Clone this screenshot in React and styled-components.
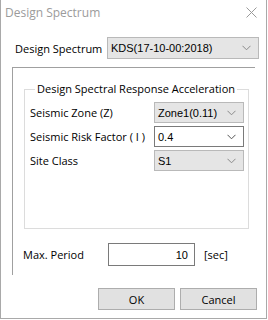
import React from "react";
import styled, { createGlobalStyle } from "styled-components";

const Global = createGlobalStyle`
  html, body {
    margin: 0;
    padding: 0;
    background: #ffffff;
  }
  * { box-sizing: border-box; }
`;

function Chevron({ color = "#6d6d6d" }) {
  return (
    <svg width="9" height="6" viewBox="0 0 9 6">
      <path d="M0.5 0.8 L4.5 4.8 L8.5 0.8" fill="none" stroke={color} strokeWidth="1" />
    </svg>
  );
}

function Combo({ value, width, height = 21, disabled }) {
  return (
    <ComboBox $w={width} $h={height} $disabled={disabled}>
      <span>{value}</span>
      <Chevron color={disabled ? "#8a8a8a" : "#555"} />
    </ComboBox>
  );
}

export default function App() {
  return (
    <>
      <Global />
      <Window>
        <TitleBar>
          <Title>Design Spectrum</Title>
          <Close>
            <svg width="11" height="11" viewBox="0 0 11 11">
              <path d="M0.5 0.5 L10.5 10.5 M10.5 0.5 L0.5 10.5" stroke="#9a9a9a" strokeWidth="1" />
            </svg>
          </Close>
        </TitleBar>

        <TopRow>
          <Label>Design Spectrum</Label>
          <Combo value="KDS(17-10-00:2018)" width={152} height={22} disabled />
        </TopRow>

        <Panel>
          <Group>
            <Legend>Design Spectral Response Acceleration</Legend>
            <GroupRows>
              <Row>
                <Label>Seismic Zone (Z)</Label>
                <Combo value="Zone1(0.11)" width={90} disabled />
              </Row>
              <Row>
                <Label>Seismic Risk Factor ( I )</Label>
                <Combo value="0.4" width={90} />
              </Row>
              <Row>
                <Label>Site Class</Label>
                <Combo value="S1" width={90} disabled />
              </Row>
            </GroupRows>
          </Group>

          <PeriodRow>
            <PeriodLabel>Max. Period</PeriodLabel>
            <NumberBox>10</NumberBox>
            <Unit>[sec]</Unit>
          </PeriodRow>
        </Panel>

        <Buttons>
          <Button>OK</Button>
          <Button>Cancel</Button>
        </Buttons>
      </Window>
    </>
  );
}

const Window = styled.div`
  width: 267px;
  height: 319px;
  background: #ffffff;
  border-left: 1px solid #a9a9a9;
  border-right: 1px solid #a9a9a9;
  border-bottom: 1px solid #a9a9a9;
  font-family: "Open Sans", "Noto Sans", sans-serif;
  font-size: 11px;
  color: #000;
  display: flex;
  flex-direction: column;
`;

const TitleBar = styled.div`
  height: 30px;
  display: flex;
  align-items: flex-start;
  justify-content: space-between;
  padding: 4px 9px 0 4px;
`;

const Title = styled.div`
  font-family: "Open Sans", "Noto Sans", sans-serif;
  font-size: 12px;
  color: #9b9b9b;
`;

const Close = styled.div`
  margin-top: 3px;
  display: flex;
`;

const TopRow = styled.div`
  display: flex;
  align-items: center;
  justify-content: space-between;
  padding: 7px 7px 0 14px;
`;

const Label = styled.div`
  font-family: "Open Sans", "Noto Sans", sans-serif;
  font-size: 11px;
  white-space: nowrap;
`;

const PeriodLabel = styled(Label)`
  width: 85px;
`;

const ComboBox = styled.div`
  width: ${(p) => p.$w}px;
  height: ${(p) => p.$h}px;
  display: flex;
  align-items: center;
  justify-content: space-between;
  padding: 0 7px 0 3px;
  background: ${(p) => (p.$disabled ? "#e5e5e5" : "#ffffff")};
  border: 1px solid ${(p) => (p.$disabled ? "#b9b9b9" : "#7a7a7a")};
  font-family: "Liberation Sans", Arial, sans-serif;
  font-size: 11px;
`;

const Panel = styled.div`
  margin: 8px 11px 0 11px;
  height: 208px;
  border-left: 1px solid #a0a0a0;
  border-top: 1px solid #a0a0a0;
  padding: 14px 6px 0 11px;
`;

const Group = styled.fieldset`
  margin: 0;
  padding: 0 4px 0 5px;
  height: 147px;
  border: 1px solid #dcdcdc;
  min-width: 0;
`;

const Legend = styled.legend`
  padding: 0 2px;
  margin-left: 5px;
  font-family: "Open Sans", "Noto Sans", sans-serif;
  font-size: 11px;
  line-height: 14px;
`;

const GroupRows = styled.div`
  display: flex;
  flex-direction: column;
  gap: 3px;
  margin-top: 6px;
`;

const Row = styled.div`
  display: flex;
  align-items: center;
  justify-content: space-between;
`;

const PeriodRow = styled.div`
  display: flex;
  align-items: center;
  margin: 14px 0 0 -1px;
`;

const NumberBox = styled.div`
  width: 87px;
  height: 23px;
  border: 1px solid #7a7a7a;
  display: flex;
  align-items: center;
  justify-content: flex-end;
  padding-right: 6px;
  font-family: "Liberation Sans", Arial, sans-serif;
  font-size: 11px;
`;

const Unit = styled.div`
  margin-left: 9px;
  font-family: "Open Sans", "Noto Sans", sans-serif;
  font-size: 11px;
`;

const Buttons = styled.div`
  display: flex;
  justify-content: flex-end;
  gap: 5px;
  padding: 13px 9px 0 0;
`;

const Button = styled.div`
  width: 77px;
  height: 22px;
  background: #e1e1e1;
  border: 1px solid #adadad;
  display: flex;
  align-items: center;
  justify-content: center;
  font-family: "Open Sans", "Noto Sans", sans-serif;
  font-size: 11px;
`;
